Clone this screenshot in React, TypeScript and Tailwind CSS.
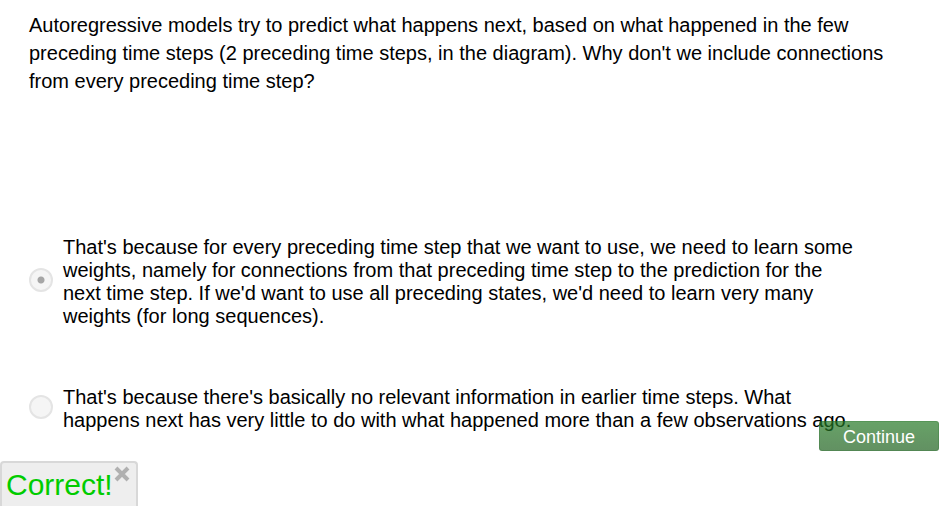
export default function App() {
  const options = [
    {
      id: "learn",
      text: "That's because for every preceding time step that we want to use, we need to learn some weights, namely for connections from that preceding time step to the prediction for the next time step. If we'd want to use all preceding states, we'd need to learn very many weights (for long sequences).",
    },
    {
      id: "irrelevant",
      text: "That's because there's basically no relevant information in earlier time steps. What happens next has very little to do with what happened more than a few observations ago.",
    },
  ];
  return (
    <main className="relative h-screen overflow-hidden bg-white font-['Liberation_Sans',Arial,sans-serif] text-[20px] text-black">
      <fieldset className="px-[29px] pt-[11px]">
        <legend className="contents">
          <span className="block max-w-[870px] leading-[28px]">
            Autoregressive models try to predict what happens next, based on what happened in the few preceding time
            steps (2 preceding time steps, in the diagram). Why don't we include connections from every preceding time
            step?
          </span>
        </legend>
        <div className="mt-[141px] flex flex-col gap-[58px]">
          {options.map((o, i) => (
            <div key={o.id} className="flex items-center gap-[10px]">
              <input
                id={o.id}
                type="radio"
                name="answer"
                disabled
                defaultChecked={i === 0}
                className="mb-1 size-6 shrink-0 appearance-none rounded-full border-2 border-[#e4e4e4] bg-[#f5f5f5] checked:bg-[radial-gradient(circle,#a6a6a6_3px,#f5f5f5_4px)]"
              />
              <label htmlFor={o.id} className="max-w-[800px] leading-[23px]">
                {o.text}
              </label>
            </div>
          ))}
        </div>
      </fieldset>
      <button
        type="button"
        className="absolute right-px bottom-[55px] h-[30px] w-[120px] rounded-[3px] border border-[#165f1b]/20 bg-linear-to-b from-[#257a25]/70 to-[#1e601e]/70 bg-origin-border pt-[2px] text-[18px] text-white"
      >
        Continue
      </button>
      <div
        role="status"
        className="absolute bottom-0 left-0 flex h-[45px] w-[138px] rounded-t-[4px] border-2 border-b-0 border-[#d8d8d8] bg-[#eeeeee] pl-1 text-[30px] leading-[44px] text-[#00cc00]"
      >
        Correct!
        <button type="button" aria-label="Close" className="mt-[3px] ml-px size-4">
          <svg viewBox="0 0 16 16" className="size-4" stroke="#b0b0b0" strokeWidth="4">
            <path d="M2 2L14 14M14 2L2 14" />
          </svg>
        </button>
      </div>
    </main>
  );
}
